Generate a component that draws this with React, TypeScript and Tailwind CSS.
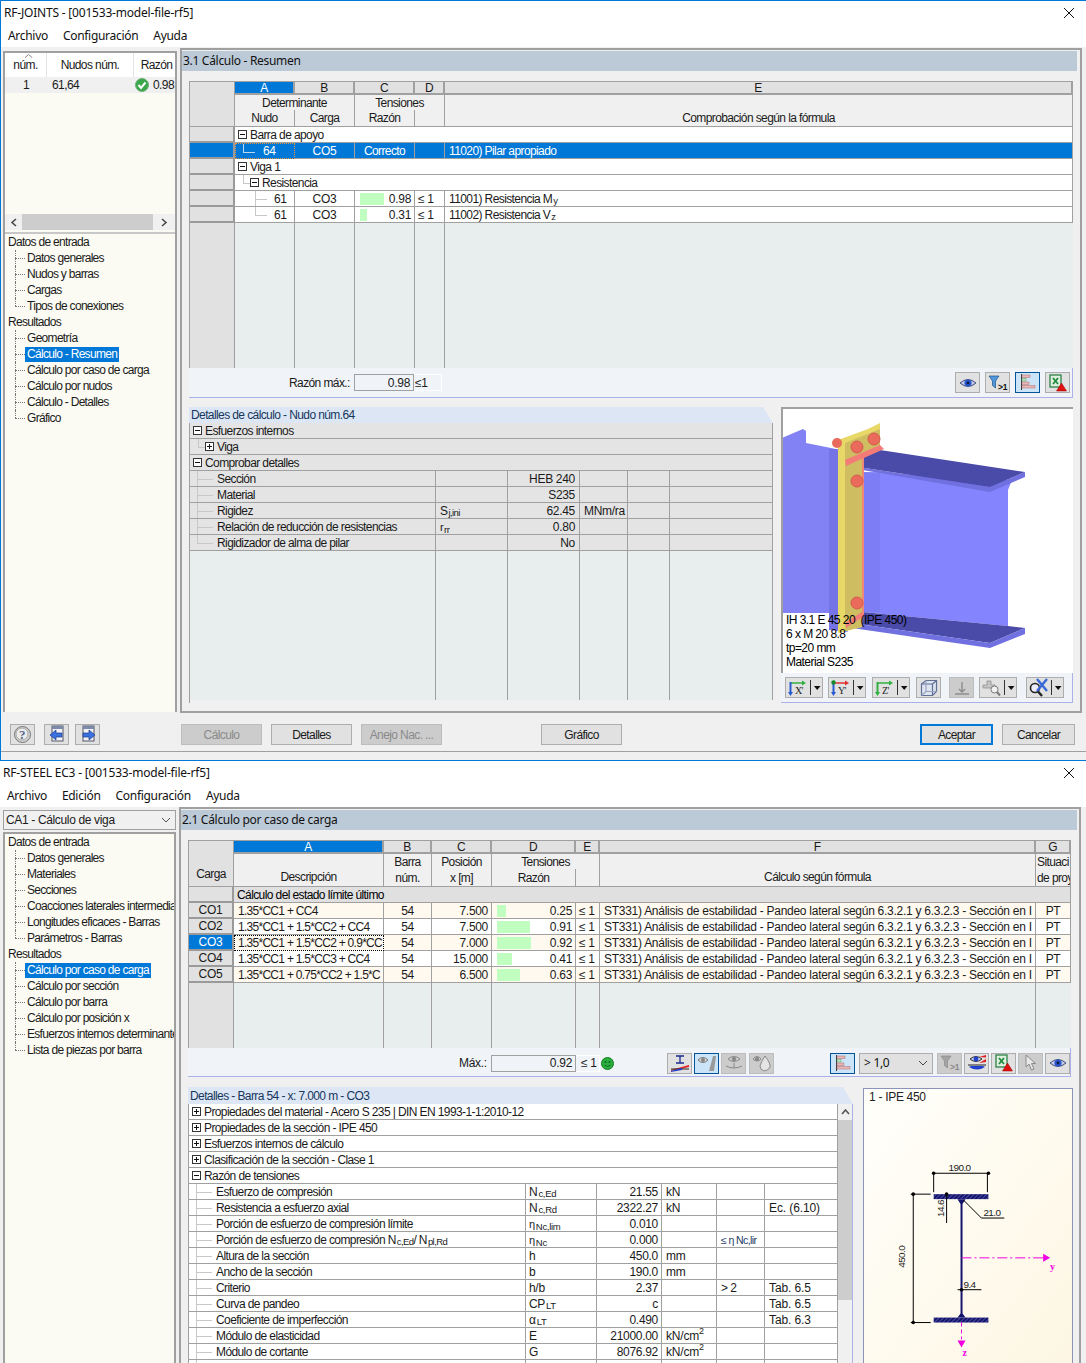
import React from "react";

const sans = "font-['Liberation_Sans',sans-serif] text-[12px] leading-[14px] tracking-[-0.6px] text-[#1a1a1a]";
const tree = "font-['Liberation_Sans',sans-serif] text-[12px] leading-[14px] tracking-[-0.7px] text-[#1a1a1a]";
const ui = "font-['Noto_Sans',sans-serif] text-[12px] leading-[14px] tracking-[-0.3px] text-[#111]";
const cell = "border-r border-b border-[#a0a0a0] flex items-center px-1 overflow-hidden whitespace-nowrap min-w-0";
const head = "border-r border-b border-[#a0a0a0] flex items-center justify-center overflow-hidden whitespace-nowrap min-w-0 bg-[#f0f0f0]";
const letter = "border-r-2 border-b-2 border-[#a0a0a0] bg-[#e1e1e1] flex items-center justify-center";
const rowBtn = "border-r-2 border-b-2 border-[#9a9a9a] bg-[#e1e1e1] flex items-center justify-center min-w-0 tracking-[-0.3px]";

const J_GRID = "grid grid-cols-[45px_60px_60px_60px_30px_1fr]";
const S_GRID = "grid grid-cols-[45px_150px_48px_60px_84px_24px_436px_1fr]";
const JD_GRID = "grid grid-cols-[246px_72px_72px_48px_42px_1fr]";
const SD_GRID = "grid grid-cols-[337px_71px_65px_55px_48px_1fr]";

const Sub = ({ children }: { children: React.ReactNode }) => <sub className="text-[9.5px] ml-[1px]">{children}</sub>;

const Box = ({ plus }: { plus?: boolean }) => (
  <svg width="9" height="9" viewBox="0 0 9 9" className="shrink-0 bg-white">
    <rect x="0.5" y="0.5" width="8" height="8" fill="white" stroke="#333" />
    <line x1="2" y1="4.5" x2="7" y2="4.5" stroke="#111" />
    {plus && <line x1="4.5" y1="2" x2="4.5" y2="7" stroke="#111" />}
  </svg>
);

// icons ------------------------------------------------------------------
const Eye = () => (
  <svg width="18" height="14" viewBox="0 0 18 14">
    <path d="M1 7 Q9 0 17 7 Q9 14 1 7Z" fill="#c4cbe8" stroke="#44507a" />
    <circle cx="9" cy="7" r="3.6" fill="#2a55d0" />
    <circle cx="9" cy="7" r="1.4" fill="#10183a" />
  </svg>
);
const Funnel = ({ gray }: { gray?: boolean }) => (
  <svg width="20" height="16" viewBox="0 0 20 16">
    <path d="M1 1 H11 L7.5 6 V13 L4.5 10.5 V6Z" fill={gray ? "#a4a4a4" : "#4d9ae0"} stroke={gray ? "#8a8a8a" : "#23507c"} strokeWidth="0.7" />
    <text x="10" y="14.5" fontSize="8.5" fontWeight="700" fontFamily="Liberation Sans" fill={gray ? "#888" : "#111"}>{">1"}</text>
  </svg>
);
const Bars = () => (
  <svg width="18" height="17" viewBox="0 0 18 17">
    <line x1="2.5" y1="0" x2="2.5" y2="16" stroke="#333" />
    <rect x="3" y="1" width="8" height="2.5" fill="#e8b8b8" stroke="#b06a6a" strokeWidth="0.5" />
    <rect x="3" y="4.5" width="4" height="2.5" fill="#bfe4bf" stroke="#5e9e5e" strokeWidth="0.5" />
    <rect x="3" y="8" width="7" height="2.5" fill="#e8b8b8" stroke="#b06a6a" strokeWidth="0.5" />
    <rect x="3" y="11.5" width="13" height="2.5" fill="#e8b8b8" stroke="#b06a6a" strokeWidth="0.5" />
  </svg>
);
const Excel = () => (
  <svg width="20" height="18" viewBox="0 0 20 18">
    <rect x="2" y="1" width="11" height="12" fill="#dfeedd" stroke="#1f7a3d" strokeWidth="1.2" />
    <path d="M5 4 L10 10 M10 4 L5 10" stroke="#1f8a3d" strokeWidth="1.8" />
    <path d="M13.5 9 L18.5 17 H8.5Z" fill="#e01010" stroke="#900" strokeWidth="0.5" />
  </svg>
);
const Cursor = () => (
  <svg width="16" height="18" viewBox="0 0 16 18">
    <path d="M3 1 L3 13 L6 10 L8.5 16 L11 15 L8.5 9.5 L12.5 9.5Z" fill="#e8e8e8" stroke="#8a8a8a" />
  </svg>
);
const Axis = ({ label, top }: { label: string; top?: boolean }) => (
  <svg width="22" height="18" viewBox="0 0 22 18">
    <path d="M3 4 H17" stroke={top ? "#e03030" : "#30b040"} strokeWidth="1.5" />
    <path d="M15 1.5 L19 4 L15 6.5Z" fill={top ? "#e03030" : "#30b040"} />
    <path d="M3.5 3 V14" stroke={label === "Z'" ? "#30b040" : "#2a5ad0"} strokeWidth="2" />
    <path d="M1 13 L3.5 17 L6 13Z" fill={label === "Z'" ? "#30b040" : "#2a5ad0"} />
    {top && <circle cx="3.5" cy="3.5" r="2.2" fill="#138a2d" />}
    <text x="8" y="15" fontSize="10" fontFamily="Liberation Serif" fill="#222">{label}</text>
  </svg>
);
const Cube = () => (
  <svg width="18" height="18" viewBox="0 0 18 18" fill="none" stroke="#5f6f95" strokeWidth="1.2">
    <path d="M1.5 5 L6 1.5 H16.5 V12.5 L12.5 16.5 H1.5Z" fill="#dde4f0" />
    <path d="M1.5 5 H12.5 V16.5 M12.5 5 L16.5 1.5" />
    <path d="M6 1.5 V12.5 H16.5 M6 12.5 L1.5 16.5" stroke="#98a4c0" />
  </svg>
);
const Weld = () => (
  <svg width="16" height="16" viewBox="0 0 16 16" stroke="#8d8d8d" fill="none">
    <path d="M8 2 V11 M5 9 L8 12 L11 9 M1 14 H15" strokeWidth="1.4" />
  </svg>
);
const ZoomPlus = () => (
  <svg width="20" height="18" viewBox="0 0 20 18">
    <path d="M1 6 H5 V2 H9 V6 H13 V9 H1Z" fill="#c4c4c4" stroke="#8a8a8a" strokeWidth="0.7" />
    <circle cx="12.5" cy="10.5" r="3.5" fill="#f2f2f2" stroke="#7a7a7a" />
    <path d="M15 13 L18 16.5" stroke="#7a7a7a" strokeWidth="2" />
  </svg>
);
const ZoomX = () => (
  <svg width="22" height="19" viewBox="0 0 22 19">
    <circle cx="7" cy="10" r="4.5" fill="#eef" stroke="#222" strokeWidth="1.6" />
    <path d="M10 13.5 L14 18" stroke="#222" strokeWidth="2.4" />
    <path d="M9 1 L19 13 M19 1 L9 13" stroke="#3868d8" strokeWidth="2.4" />
  </svg>
);
const Section = () => (
  <svg width="20" height="17" viewBox="0 0 20 17">
    <path d="M6 1 H14 M10 1 V8 M6 8 H14" stroke="#1a2a8a" strokeWidth="1.3" />
    <path d="M1 15 L19 10 V12 L1 16Z" fill="#e02020" />
    <path d="M1 14 H19" stroke="#222" />
    <path d="M1 16 L12 13 V15 L1 17Z" fill="#2040d0" />
  </svg>
);
const EyeSlope = () => (
  <svg width="20" height="17" viewBox="0 0 20 17">
    <path d="M1 5 Q6 0 11 5 Q6 10 1 5Z" fill="#d8d8d8" stroke="#777" />
    <circle cx="6" cy="5" r="2" fill="#888" />
    <path d="M12 16 L16 1 H19 L17 16Z" fill="#9a9a9a" />
  </svg>
);
const EyeLoad = () => (
  <svg width="20" height="17" viewBox="0 0 20 17" fill="none" stroke="#8a8a8a">
    <path d="M4 4 Q10 -1 16 4 Q10 9 4 4Z" fill="#d4d4d4" />
    <circle cx="10" cy="4" r="1.8" fill="#8a8a8a" />
    <path d="M2 11 Q10 15 18 11 M10 8 V13" />
  </svg>
);
const EyeDrop = () => (
  <svg width="20" height="18" viewBox="0 0 20 18" stroke="#8a8a8a">
    <path d="M1 5 Q5 0 9 5 Q5 9 1 5Z" fill="#d4d4d4" />
    <circle cx="5" cy="5" r="1.6" fill="#8a8a8a" />
    <path d="M13 2 Q19 10 18 13 Q16 17 12 17 Q8 16 8 12 Q9 8 13 2Z" fill="#e4e4e4" />
  </svg>
);
const EyeStress = () => (
  <svg width="20" height="18" viewBox="0 0 20 18">
    <path d="M3 5 Q9 0 15 5 Q9 10 3 5Z" fill="#c4cbe8" stroke="#333" />
    <circle cx="9" cy="5" r="2.4" fill="#2040d0" />
    <path d="M12 9 L19 5 V8Z" fill="#e02020" />
    <path d="M12 3 L19 1 V3.5Z" fill="#e02020" />
    <path d="M1 11 H19" stroke="#222" />
    <path d="M2 13 Q10 18 18 13 L16 12 H4Z" fill="#2040d0" />
  </svg>
);
const Help = () => (
  <svg width="19" height="19" viewBox="0 0 19 19">
    <circle cx="9.5" cy="9.5" r="8" fill="#d0d0d0" stroke="#777" />
    <circle cx="9" cy="9" r="6" fill="#ececec" stroke="#aaa" />
    <text x="6" y="14" fontSize="13" fontWeight="700" fontFamily="Liberation Serif" fill="#5a6a8e">?</text>
  </svg>
);
const NavArrow = ({ right }: { right?: boolean }) => (
  <svg width="20" height="19" viewBox="0 0 20 19">
    <rect x="5" y="1" width="11" height="15" fill="#f2f2f6" stroke="#556" />
    <rect x="5" y="1" width="11" height="3" fill="#7a8aa8" />
    {right ? (
      <path d="M5 8 H11 V5 L17 10 L11 15 V12 H5Z" fill="#3a70e0" stroke="#1c3c88" strokeWidth="0.7" />
    ) : (
      <path d="M15 8 H9 V5 L3 10 L9 15 V12 H15Z" fill="#3a70e0" stroke="#1c3c88" strokeWidth="0.7" />
    )}
  </svg>
);

const Tool = ({ children, active, off, className = "" }: { children: React.ReactNode; active?: boolean; off?: boolean; className?: string }) => (
  <div
    className={`w-[25px] h-[21px] shrink-0 flex items-center justify-center border ${
      active ? "bg-[#cce4f7] border-[#005499]" : off ? "bg-[#cccccc] border-[#bdbdbd]" : "bg-[#e1e1e1] border-[#adadad]"
    } ${className}`}
  >
    {children}
  </div>
);

const Split = ({ children, className = "" }: { children: React.ReactNode; className?: string }) => (
  <div className={`h-[21px] w-[38px] shrink-0 flex items-center border border-[#adadad] bg-[#e1e1e1] ${className}`}>
    <div className="w-[25px] flex justify-center">{children}</div>
    <div className="w-px h-[15px] bg-[#333]" />
    <svg width="11" height="6" viewBox="0 0 11 6" className="ml-[1px]">
      <path d="M2 1 H9 L5.5 5Z" fill="#111" />
    </svg>
  </div>
);

const Btn = ({ children, off, primary, className = "" }: { children: React.ReactNode; off?: boolean; primary?: boolean; className?: string }) => (
  <div
    className={`h-[21px] shrink-0 flex items-center justify-center ${
      primary ? "border-2 border-[#0078d7] bg-[#e1e1e1]" : off ? "border border-[#bdbdbd] bg-[#cccccc]" : "border border-[#adadad] bg-[#e1e1e1]"
    } ${sans} ${off ? "!text-[#8a8a8a]" : ""} ${className}`}
  >
    {children}
  </div>
);

// shell ------------------------------------------------------------------
const TitleBar = ({ title, menus, h }: { title: string; menus: { name: string; cls: string }[]; h: string }) => (
  <div className="bg-white">
    <div className={`${h} flex items-center justify-between font-['Noto_Sans',sans-serif] text-[12px] tracking-[-0.2px] text-[#111]`}>
      <span className="pl-[3px]">{title}</span>
      <svg width="12" height="12" viewBox="0 0 12 12" className="mr-[11px]" stroke="#111">
        <path d="M1 1 L11 11 M11 1 L1 11" />
      </svg>
    </div>
    <div className={`${h} flex items-center ${ui}`}>
      {menus.map((m) => (
        <span key={m.name} className={m.cls}>{m.name}</span>
      ))}
    </div>
  </div>
);

const NavItem = ({ label, last, selected }: { label: string; last?: boolean; selected?: boolean }) => (
  <div className="relative h-4 flex items-center pl-[5px] whitespace-nowrap overflow-hidden">
    <span className={`absolute left-[10px] top-0 border-l border-dotted border-[#777] ${last ? "h-2" : "h-4"}`} />
    <span className="w-[10px] ml-[5px] shrink-0 border-t border-dotted border-[#777]" />
    <span className={selected ? "bg-[#0078d7] text-white px-[2px] h-[15px] flex items-center" : "px-[2px]"}>{label}</span>
  </div>
);

const NavTree = ({ groups, selected }: { groups: { title: string; items: string[] }[]; selected: string }) => (
  <div className={`${tree} overflow-hidden`}>
    {groups.map((g) => (
      <div key={g.title}>
        <div className="h-4 flex items-center pl-[3px]">{g.title}</div>
        {g.items.map((it, i) => (
          <NavItem key={it} label={it} last={i === g.items.length - 1} selected={it === selected} />
        ))}
      </div>
    ))}
  </div>
);

const Ratio = ({ value, scale, className = "" }: { value: number; scale: number; className?: string }) => (
  <div className={`${cell} justify-between !pl-[5px] !pr-[3px] tracking-[-0.3px] ${className}`}>
    <span className="h-[12px] bg-[#c0ffc0] shrink-0" style={{ width: Math.round(value * scale) }} />
    <span>{value.toFixed(2)}</span>
  </div>
);

// RF-JOINTS --------------------------------------------------------------
const joinsNav = [
  { title: "Datos de entrada", items: ["Datos generales", "Nudos y barras", "Cargas", "Tipos de conexiones"] },
  { title: "Resultados", items: ["Geometría", "Cálculo - Resumen", "Cálculo por caso de carga", "Cálculo por nudos", "Cálculo - Detalles", "Gráfico"] },
];

const JoinsLeft = () => (
  <div className="mt-[3px] ml-[2px] w-[174px] h-[661px] border-t-2 border-l-2 border-r-2 border-[#a0a0a0] bg-[#fbfbf3] flex flex-col">
    <div className={`grid grid-cols-[42px_87px_1fr] h-[24px] ${sans} tracking-[-0.3px] bg-white`}>
      <div className="relative flex items-end justify-center pb-[5px] border-r border-[#e4e4e4]">
        <svg width="9" height="4" viewBox="0 0 9 4" fill="none" stroke="#888" className="absolute top-[1px] left-[19px]"><path d="M1 3.5 L4.5 0.5 L8 3.5" /></svg>
        núm.
      </div>
      <div className="flex items-end justify-center pb-[5px] border-r border-[#e4e4e4]">Nudos núm.</div>
      <div className="flex items-end justify-center pb-[5px] pl-[4px]">Razón</div>
    </div>
    <div className={`grid grid-cols-[42px_87px_1fr] h-4 bg-[#f0f0f0] ${sans} tracking-[-0.1px]`}>
      <div className="flex items-center justify-center">1</div>
      <div className="flex items-center pl-[5px]">61,64</div>
      <div className="flex items-center justify-end pr-[1px] gap-[4px]">
        <svg width="14" height="14" viewBox="0 0 14 14">
          <circle cx="7" cy="7" r="6.5" fill="#3aa84a" stroke="#6fae7c" />
          <path d="M3.5 7 L6 10 L10.5 4.5" fill="none" stroke="white" strokeWidth="2" />
        </svg>
        0.98
      </div>
    </div>
    <div className="h-[121px]" />
    <div className="h-4 flex items-stretch bg-[#f0f0f0]">
      <div className="w-[17px] flex items-center justify-center">
        <svg width="7" height="9" viewBox="0 0 7 9" fill="none" stroke="#444" strokeWidth="1.5"><path d="M6 1 L2 4.5 L6 8" /></svg>
      </div>
      <div className="w-[131px] bg-[#cdcdcd]" />
      <div className="flex-1 flex items-center justify-center">
        <svg width="7" height="9" viewBox="0 0 7 9" fill="none" stroke="#444" strokeWidth="1.5"><path d="M1 1 L5 4.5 L1 8" /></svg>
      </div>
    </div>
    <div className="h-[2px] mt-[2px] bg-[#c8c8c8]" />
    <NavTree groups={joinsNav} selected="Cálculo - Resumen" />
  </div>
);

const JoinsTable = () => (
  <div className={`ml-[7px] mt-[10px] w-[884px] border-t border-l border-[#a0a0a0] ${sans}`}>
    <div className={`${J_GRID} grid-rows-[13px_15px_17px] bg-[#f0f0f0]`}>
      <div className="row-span-3 bg-[#e1e1e1] border-r border-b border-[#a0a0a0]" />
      <div className="border-r-2 border-b-2 border-[#a0a0a0] bg-[#0078d7] text-white flex items-center justify-center">A</div>
      <div className={letter}>B</div>
      <div className={letter}>C</div>
      <div className={letter}>D</div>
      <div className={letter}>E</div>
      <div className={`${head} col-span-2 !border-b-0`}>Determinante</div>
      <div className={`${head} col-span-2 !border-b-0`}>Tensiones</div>
      <div className={`${head} row-span-2 !items-end pb-[1px]`}>Comprobación según la fórmula</div>
      <div className={head}>Nudo</div>
      <div className={head}>Carga</div>
      <div className={head}>Razón</div>
      <div className={head} />
    </div>
    <div className={`${J_GRID} h-4`}>
      <div className={rowBtn} />
      <div className={`${cell} col-span-5 bg-white gap-[3px] !pl-[3px]`}><Box />Barra de apoyo</div>
    </div>
    <div className={`${J_GRID} h-4 bg-[#0078d7] text-white`}>
      <div className="border-r-2 border-b-2 border-[#9a9a9a] bg-[#0078d7]" />
      <div className="relative border border-dotted border-[#e8963c] flex items-center pl-[27px] text-white tracking-[-0.3px]">
        <span className="absolute left-[7px] top-0 h-2 w-px bg-[#bcd8f0]" />
        <span className="absolute left-[7px] top-2 w-[12px] h-px bg-[#bcd8f0]" />
        64
      </div>
      <div className={`${cell} justify-center border-[#6aa8dc] tracking-[-0.3px]`}>CO5</div>
      <div className={`${cell} justify-center border-[#6aa8dc]`}>Correcto</div>
      <div className={`${cell} border-[#6aa8dc]`} />
      <div className={`${cell} border-[#6aa8dc]`}>11020) Pilar apropiado</div>
    </div>
    <div className={`${J_GRID} h-4`}>
      <div className={rowBtn} />
      <div className={`${cell} col-span-5 bg-white gap-[3px] !pl-[3px]`}><Box />Viga 1</div>
    </div>
    <div className={`${J_GRID} h-4`}>
      <div className={rowBtn} />
      <div className={`${cell} relative col-span-5 bg-white gap-[3px] !pl-[15px]`}>
        <span className="absolute left-[8px] top-0 h-2 w-px bg-[#c8c8c8]" />
        <span className="absolute left-[8px] top-2 w-[7px] h-px bg-[#c8c8c8]" />
        <Box />Resistencia
      </div>
    </div>
    {[
      { v: 0.98, t: <>11001) Resistencia M<Sub>y</Sub></>, last: false },
      { v: 0.31, t: <>11002) Resistencia V<Sub>z</Sub></>, last: true },
    ].map((r) => (
      <div key={r.v} className={`${J_GRID} h-4 bg-white`}>
        <div className={rowBtn} />
        <div className={`${cell} relative !pl-[39px] tracking-[-0.3px]`}>
          <span className={`absolute left-[20px] top-0 w-px bg-[#c8c8c8] ${r.last ? "h-2" : "h-4"}`} />
          <span className="absolute left-[20px] top-2 w-[12px] h-px bg-[#c8c8c8]" />
          61
        </div>
        <div className={`${cell} justify-center tracking-[-0.3px]`}>CO3</div>
        <Ratio value={r.v} scale={24} />
        <div className={`${cell} !px-[3px] tracking-[-0.3px]`}>≤ 1</div>
        <div className={cell}>{r.t}</div>
      </div>
    ))}
    <div className={`${J_GRID} h-[145px]`}>
      <div className="bg-[#e1e1e1] border-r border-[#a0a0a0]" />
      {[0, 1, 2, 3].map((i) => <div key={i} className="bg-[#e8eded] border-r border-[#a0a0a0]" />)}
      <div className="bg-[#e8eded]" />
    </div>
    <div className="h-[30px] -ml-px bg-[#f0f4f8] border-b border-r border-[#a9b1e8] flex items-center tracking-[-0.3px]">
      <span className="ml-[100px] w-[65px] tracking-[-0.6px]">Razón máx.:</span>
      <div className="w-[60px] h-[17px] border border-[#a0a0a0] flex items-center justify-end pr-[3px]">0.98</div>
      <div className="w-[28px] h-[17px] border border-l-0 border-white flex items-center pl-[1px]">≤1</div>
      <Tool className="ml-[513px]"><Eye /></Tool>
      <Tool className="ml-[5px]"><Funnel /></Tool>
      <Tool active className="ml-[5px]"><Bars /></Tool>
      <Tool className="ml-[5px]"><Excel /></Tool>
    </div>
  </div>
);

const joinsDetails: [React.ReactNode, React.ReactNode, string, string][] = [
  ["Sección", "", "HEB 240", ""],
  ["Material", "", "S235", ""],
  ["Rigidez", <>S<Sub>j,ini</Sub></>, "62.45", "MNm/ra"],
  ["Relación de reducción de resistencias", <span className="text-[11px]">r<Sub>rr</Sub></span>, "0.80", ""],
  ["Rigidizador de alma de pilar", "", "No", ""],
];

const Chamfer = ({ text, className = "" }: { text: string; className?: string }) => (
  <div className={`bg-[#dce6f4] flex items-center pl-[2px] text-[#17365d] [clip-path:polygon(0_0,calc(100%-10px)_0,100%_100%,0_100%)] ${className}`}>
    {text}
  </div>
);

const JointShape = () => (
  <svg viewBox="783 409 290 265" className="absolute inset-0 w-full h-[265px]">
    <path d="M782 438 L803 429 L806 431 L806 443 L836 449 L838 460 L829 458 L829 630 L848 632 L838 613 L782 613Z" fill="#8282f4" />
    <path d="M829 449 H840 V630 H829Z" fill="#7474e6" />
    <path d="M862 472 L1012 480 L1008 490 V626 L862 612Z" fill="#8484ff" />
    <path d="M862 472 H880 V612 H862Z" fill="#7c7cf4" opacity="0.8" />
    <path d="M845 467 L990 492 L1025 477 V472 L990 487 L845 465Z" fill="#7070e0" />
    <path d="M845 465 L880 450 L1025 472 L990 487Z" fill="#4a4aa8" />
    <path d="M845 622 L990 643 L1025 628 L1008 626 L862 612 L845 618Z" fill="#4a4aa8" />
    <path d="M845 622 L990 643 L1025 628 V634 L990 648 L845 627Z" fill="#7070e0" />
    <path d="M838 440 L868 429 L880 423 V446 L862 458 V627 L838 633Z" fill="#e8d868" />
    <path d="M845 443 L880 429 V446 L862 458 V627 L845 631Z" fill="#cfbd62" />
    <path d="M862 458 H864 V614 L862 627Z" fill="#f08878" />
    <path d="M845 460 L880 445 L884 449 L846 466Z" fill="#f47c78" />
    <path d="M846 622 L862 612 L864 616 L846 628Z" fill="#f47c78" />
    <circle cx="837" cy="443" r="5" fill="#e86a5c" />
    <circle cx="857" cy="447" r="6" fill="#ea6a5c" stroke="#d65a4e" />
    <circle cx="874" cy="439" r="6" fill="#ea6a5c" stroke="#d65a4e" />
    <circle cx="857" cy="481" r="6" fill="#ea6a5c" stroke="#d65a4e" />
    <circle cx="857" cy="603" r="6" fill="#ea6a5c" stroke="#d65a4e" />
  </svg>
);

const JoinsBody = () => (
  <div className={`flex ml-[7px] mt-[9px] ${sans}`}>
    <div className="w-[584px] h-[296px] flex flex-col">
      <Chamfer text="Detalles de cálculo - Nudo núm.64" className="h-4" />
      <div className="flex-1 border-l border-[#a0a0a0]">
        {([["Esfuerzos internos", false, 0], ["Viga", true, 1], ["Comprobar detalles", false, 0]] as [string, boolean, number][]).map(([t, p, d]) => (
          <div key={t} className={`${cell} relative h-4 bg-[#e4e4e4] gap-[3px] ${d ? "!pl-[15px]" : "!pl-[3px]"}`}>
            {d === 1 && <span className="absolute left-[8px] top-0 h-2 w-px bg-[#c8c8c8]" />}
            {d === 1 && <span className="absolute left-[8px] top-2 w-[7px] h-px bg-[#c8c8c8]" />}
            <Box plus={p} />{t}
          </div>
        ))}
        {joinsDetails.map(([n, s, v, u], i) => (
          <div key={i} className={`${JD_GRID} h-4 bg-[#e4e4e4]`}>
            <div className={`${cell} relative !pl-[27px]`}>
              <span className={`absolute left-[7px] top-0 w-px bg-[#c8c8c8] ${i === 4 ? "h-2" : "h-4"}`} />
              <span className="absolute left-[7px] top-2 w-[16px] h-px bg-[#c8c8c8]" />
              {n}
            </div>
            <div className={cell}>{s}</div>
            <div className={`${cell} justify-end tracking-[-0.3px]`}>{v}</div>
            <div className={`${cell} tracking-[-0.3px]`}>{u}</div>
            <div className={cell} />
            <div className={cell} />
          </div>
        ))}
        <div className={`${JD_GRID} h-[149px] bg-[#e8eded]`}>
          {[0, 1, 2, 3, 4, 5].map((i) => <div key={i} className="border-r border-[#a0a0a0]" />)}
        </div>
      </div>
    </div>
    <div className="relative ml-[8px] w-[292px] h-[296px] bg-white border-t-2 border-l-2 border-[#a0a0a0]">
      <JointShape />
      <div className="absolute left-[3px] top-[204px] text-[12px] leading-[14px] tracking-[-0.55px] text-black whitespace-pre">
        {"IH 3.1 E 45 20  (IPE 450)\n6 x M 20 8.8\ntp=20 mm\nMaterial S235"}
      </div>
      <div className="absolute left-[-2px] top-[264px] w-[292px] h-[30px] bg-[#f0f4f8] border-r border-b border-[#a9b1e8] flex items-center">
        <Split className="ml-[4px]"><Axis label="X'" /></Split>
        <Split className="ml-[5px]"><Axis label="Y'" top /></Split>
        <Split className="ml-[6px]"><Axis label="Z'" /></Split>
        <Tool className="ml-[6px]"><Cube /></Tool>
        <Tool off className="ml-[8px]"><Weld /></Tool>
        <Split className="ml-[5px]"><ZoomPlus /></Split>
        <Split className="ml-[9px]"><ZoomX /></Split>
      </div>
    </div>
  </div>
);

const JoinsWindow = () => (
  <div className="h-[760px] border-t border-l border-[#0078d7] bg-[#f0f0f0] overflow-hidden">
    <TitleBar
      title="RF-JOINTS - [001533-model-file-rf5]"
      h="h-[23px]"
      menus={[
        { name: "Archivo", cls: "ml-[7px]" },
        { name: "Configuración", cls: "ml-[15px]" },
        { name: "Ayuda", cls: "ml-[15px]" },
      ]}
    />
    <div className="flex h-[665px] mt-[1px]">
      <JoinsLeft />
      <div className="ml-[3px] w-[902px] h-[665px] border-2 border-[#a0a0a0] pt-[1px]">
        <div className={`w-[895px] h-[20px] bg-[#bccad8] flex items-center pl-[1px] ${ui}`}>3.1 Cálculo - Resumen</div>
        <JoinsTable />
        <JoinsBody />
      </div>
    </div>
    <div className="h-[39px] flex items-start pt-[11px] border-b border-[#a0a0a0]">
      <Tool className="ml-[9px]"><Help /></Tool>
      <Tool className="ml-[9px]"><NavArrow /></Tool>
      <Tool className="ml-[6px]"><NavArrow right /></Tool>
      <Btn off className="ml-[81px] w-[81px]">Cálculo</Btn>
      <Btn className="ml-[9px] w-[81px]">Detalles</Btn>
      <Btn off className="ml-[9px] w-[81px]">Anejo Nac. ...</Btn>
      <Btn className="ml-[99px] w-[81px]">Gráfico</Btn>
      <Btn primary className="ml-[298px] w-[73px]">Aceptar</Btn>
      <Btn className="ml-[9px] w-[73px]">Cancelar</Btn>
    </div>
  </div>
);

// RF-STEEL ---------------------------------------------------------------
const steelNav = [
  { title: "Datos de entrada", items: ["Datos generales", "Materiales", "Secciones", "Coacciones laterales intermedias", "Longitudes eficaces - Barras", "Parámetros - Barras"] },
  { title: "Resultados", items: ["Cálculo por caso de carga", "Cálculo por sección", "Cálculo por barra", "Cálculo por posición x", "Esfuerzos internos determinantes", "Lista de piezas por barra"] },
];

const steelRows = [
  { id: "CO1", d: "1.35*CC1 + CC4", x: "7.500", r: 0.25 },
  { id: "CO2", d: "1.35*CC1 + 1.5*CC2 + CC4", x: "7.500", r: 0.91 },
  { id: "CO3", d: "1.35*CC1 + 1.5*CC2 + 0.9*CC", x: "7.000", r: 0.92 },
  { id: "CO4", d: "1.35*CC1 + 1.5*CC3 + CC4", x: "15.000", r: 0.41 },
  { id: "CO5", d: "1.35*CC1 + 0.75*CC2 + 1.5*C", x: "6.500", r: 0.63 },
];

const SteelTable = () => (
  <div className={`ml-[7px] mt-[10px] w-[883px] border-t border-l border-[#a0a0a0] ${sans}`}>
    <div className={`${S_GRID} grid-rows-[13px_15px_18px] bg-[#f0f0f0]`}>
      <div className="row-span-3 bg-[#e1e1e1] border-r border-b border-[#a0a0a0] flex items-end justify-center pb-[5px]">Carga</div>
      <div className="border-r-2 border-b-2 border-[#a0a0a0] bg-[#0078d7] text-white flex items-center justify-center">A</div>
      {["B", "C", "D", "E", "F", "G"].map((c) => <div key={c} className={letter}>{c}</div>)}
      <div className={`${head} row-span-2 !items-end pb-[2px]`}>Descripción</div>
      <div className={`${head} !border-b-0`}>Barra</div>
      <div className={`${head} !border-b-0`}>Posición</div>
      <div className={`${head} col-span-2 !border-b-0`}>Tensiones</div>
      <div className={`${head} row-span-2 !items-end pb-[2px]`}>Cálculo según fórmula</div>
      <div className={`${head} !border-b-0 !justify-start pl-[1px]`}>Situaci</div>
      <div className={head}>núm.</div>
      <div className={head}>x [m]</div>
      <div className={head}>Razón</div>
      <div className={head} />
      <div className={`${head} !justify-start pl-[1px]`}>de proy</div>
    </div>
    <div className={`${S_GRID} h-4`}>
      <div className={rowBtn} />
      <div className={`${cell} col-span-7 bg-[#e0e0e0] !pl-[3px] text-black`}>Cálculo del estado límite último</div>
    </div>
    {steelRows.map((r, i) => (
      <div key={r.id} className={`${S_GRID} h-4 ${i % 2 === 0 ? "bg-[#fff9ef]" : "bg-white"}`}>
        {r.id === "CO3" ? (
          <div className="border-r-2 border-b-2 border-[#9a9a9a] bg-[#0078d7] text-white flex items-center justify-center tracking-[-0.3px]">{r.id}</div>
        ) : (
          <div className={rowBtn}>{r.id}</div>
        )}
        <div className={r.id === "CO3" ? "border border-dotted border-black flex items-center px-[3px] overflow-hidden whitespace-nowrap tracking-[-0.72px]" : `${cell} !px-[4px] tracking-[-0.72px]`}>{r.d}</div>
        <div className={`${cell} justify-center tracking-[-0.3px]`}>54</div>
        <div className={`${cell} justify-end !pr-[3px] tracking-[-0.3px]`}>{r.x}</div>
        <Ratio value={r.r} scale={36.5} />
        <div className={`${cell} !px-[3px] tracking-[-0.3px]`}>≤ 1</div>
        <div className={`${cell} tracking-[-0.27px]`}>ST331) Análisis de estabilidad - Pandeo lateral según 6.3.2.1 y 6.3.2.3 - Sección en I</div>
        <div className={`${cell} justify-center tracking-[-0.3px]`}>PT</div>
      </div>
    ))}
    <div className={`${S_GRID} h-[65px]`}>
      <div className="bg-[#e1e1e1] border-r border-[#a0a0a0]" />
      {[0, 1, 2, 3, 4, 5].map((i) => <div key={i} className="bg-[#e8eded] border-r border-[#a0a0a0]" />)}
      <div className="bg-[#e8eded]" />
    </div>
    <div className="h-[29px] -ml-px pt-[2px] bg-[#f0f4f8] border-b border-r border-[#a9b1e8] flex items-center tracking-[-0.3px]">
      <span className="ml-[271px] w-[32px]">Máx.:</span>
      <div className="w-[85px] h-[17px] border border-[#a0a0a0] flex items-center justify-end pr-[3px]">0.92</div>
      <div className="w-[24px] h-[17px] border border-l-0 border-white flex items-center pl-[5px]">≤ 1</div>
      <svg width="13" height="13" viewBox="0 0 13 13" className="ml-[1px]">
        <circle cx="6.5" cy="6.5" r="6" fill="#2cae3a" stroke="#0f7a20" />
        <circle cx="4.5" cy="5" r="1" fill="#063" />
        <circle cx="8.5" cy="5" r="1" fill="#063" />
        <path d="M3.5 8 Q6.5 11 9.5 8" fill="none" stroke="#063" />
      </svg>
      <Tool className="ml-[53px]"><Section /></Tool>
      <Tool active className="ml-[2px]"><EyeSlope /></Tool>
      <Tool off className="ml-[2px]"><EyeLoad /></Tool>
      <Tool off className="ml-[3px]"><EyeDrop /></Tool>
      <Tool active className="ml-[56px]"><Bars /></Tool>
      <div className={`ml-[4px] w-[74px] h-[21px] border border-[#adadad] bg-[#e1e1e1] flex items-center justify-between px-[4px] ${ui}`}>
        {"> 1,0"}
        <svg width="10" height="6" viewBox="0 0 10 6" fill="none" stroke="#444"><path d="M1 1 L5 5 L9 1" /></svg>
      </div>
      <Tool off className="ml-[4px]"><Funnel gray /></Tool>
      <Tool className="ml-[2px]"><EyeStress /></Tool>
      <Tool className="ml-[2px]"><Excel /></Tool>
      <Tool off className="ml-[2px]"><Cursor /></Tool>
      <Tool className="ml-[2px]"><Eye /></Tool>
    </div>
  </div>
);

const steelTree = [
  { t: "Propiedades del material - Acero S 235 | DIN EN 1993-1-1:2010-12", plus: true },
  { t: "Propiedades de la sección - IPE 450", plus: true },
  { t: "Esfuerzos internos de cálculo", plus: true },
  { t: "Clasificación de la sección - Clase 1", plus: true },
  { t: "Razón de tensiones", plus: false },
];

const steelData: [React.ReactNode, React.ReactNode, string, React.ReactNode, React.ReactNode, string][] = [
  ["Esfuerzo de compresión", <>N<Sub>c,Ed</Sub></>, "21.55", "kN", "", ""],
  ["Resistencia a esfuerzo axial", <>N<Sub>c,Rd</Sub></>, "2322.27", "kN", "", "Ec. (6.10)"],
  ["Porción de esfuerzo de compresión límite", <span className="text-[11px]">η<Sub>Nc,lim</Sub></span>, "0.010", "", "", ""],
  [<>Porción de esfuerzo de compresión N<Sub>c,Ed</Sub> / N<Sub>pl,Rd</Sub></>, <span className="text-[11px]">η<Sub>Nc</Sub></span>, "0.000", "", <span className="text-[10.5px] text-[#223a66]">≤ η Nc,lir</span>, ""],
  ["Altura de la sección", "h", "450.0", "mm", "", ""],
  ["Ancho de la sección", "b", "190.0", "mm", "", ""],
  ["Criterio", "h/b", "2.37", "", "> 2", "Tab. 6.5"],
  ["Curva de pandeo", <>CP<Sub>LT</Sub></>, "c", "", "", "Tab. 6.5"],
  ["Coeficiente de imperfección", <>α<Sub>LT</Sub></>, "0.490", "", "", "Tab. 6.3"],
  ["Módulo de elasticidad", "E", "21000.00", <>kN/cm<sup className="text-[9px]">2</sup></>, "", ""],
  ["Módulo de cortante", "G", "8076.92", <>kN/cm<sup className="text-[9px]">2</sup></>, "", ""],
  ["", "", "", "", "", ""],
];

const SectionDrawing = () => (
  <svg viewBox="864 1089 209 275" className="absolute inset-0 w-full h-[275px]">
    <defs>
      <pattern id="hatch" width="3" height="3" patternUnits="userSpaceOnUse" patternTransform="rotate(45)">
        <rect width="3" height="3" fill="#14146e" />
        <line x1="0" y1="0" x2="0" y2="3" stroke="#9a9ae0" strokeWidth="0.8" />
      </pattern>
    </defs>
    <rect x="934" y="1194" width="55" height="5" fill="url(#hatch)" />
    <rect x="934" y="1318" width="55" height="5" fill="url(#hatch)" />
    <path d="M958 1199 H966 L963 1204 V1314 L966 1318 H958 L961 1314 V1204Z" fill="#14146e" />
    <g stroke="#000" strokeWidth="1" fill="none">
      <path d="M934 1173 H989 M934 1173 V1192 M988 1173 V1192" />
      <path d="M913.5 1194 V1323 M911 1194 H931 M911 1323 H931" />
      <path d="M947 1193 V1223" />
      <path d="M964 1200 L982 1218 H1005" />
      <path d="M958 1290 H982" />
    </g>
    <g fill="#000">
      <circle cx="934" cy="1173" r="1.8" />
      <circle cx="989" cy="1173" r="1.8" />
      <circle cx="913.5" cy="1194" r="1.8" />
      <circle cx="913.5" cy="1323" r="1.8" />
      <circle cx="947" cy="1194" r="1.8" />
      <circle cx="962" cy="1290" r="1.8" />
    </g>
    <g fontFamily="Liberation Sans" fontSize="10" fill="#222">
      <text x="949" y="1171">190.0</text>
      <text x="984" y="1216">21.0</text>
      <text x="964" y="1288">9.4</text>
      <text transform="translate(905 1268) rotate(-90)" fontSize="10">450.0</text>
      <text transform="translate(944 1217) rotate(-90)" fontSize="10">14.6</text>
    </g>
    <path d="M962 1258 H1046" stroke="#f000e0" strokeWidth="1" strokeDasharray="10 3 2 3" />
    <path d="M1044 1254 L1051 1258 L1044 1262Z" fill="#f000e0" />
    <path d="M962 1323 V1340" stroke="#f000e0" strokeWidth="1" strokeDasharray="4 3" />
    <path d="M958 1341 L966 1341 L962 1348Z" fill="#f000e0" />
    <text x="1051" y="1270" fontFamily="Liberation Serif" fontSize="10" fontWeight="700" fill="#f000e0">y</text>
    <text x="963" y="1357" fontFamily="Liberation Serif" fontSize="10" fontWeight="700" fill="#f000e0">z</text>
  </svg>
);

const SteelBody = () => (
  <div className={`flex ml-[7px] mt-[10px] ${sans}`}>
    <div className="w-[665px] flex flex-col">
      <Chamfer text="Detalles - Barra 54 - x: 7.000 m - CO3" className="h-[17px]" />
      <div className="flex">
        <div className="w-[650px] bg-white border-l border-[#a0a0a0]">
          {steelTree.map((r) => (
            <div key={r.t} className={`${cell} h-4 gap-[3px] !pl-[3px]`}><Box plus={r.plus} />{r.t}</div>
          ))}
          {steelData.map(([n, s, v, u, l, e], i) => (
            <div key={i} className={`${SD_GRID} h-4`}>
              <div className={`${cell} relative !pl-[27px]`}>
                <span className="absolute left-[7px] top-0 h-4 w-px bg-[#c8c8c8]" />
                <span className="absolute left-[7px] top-2 w-[16px] h-px bg-[#c8c8c8]" />
                {n}
              </div>
              <div className={`${cell} !pl-[3px] tracking-[-0.3px]`}>{s}</div>
              <div className={`${cell} justify-end !pr-[3px] tracking-[-0.3px]`}>{v}</div>
              <div className={`${cell} tracking-[-0.2px]`}>{u}</div>
              <div className={cell}>{l}</div>
              <div className={`${cell} tracking-[-0.1px]`}>{e}</div>
            </div>
          ))}
        </div>
        <div className="w-[15px] bg-[#f0f0f0] border-r border-[#a9b1e8] flex flex-col">
          <div className="h-4 flex items-center justify-center">
            <svg width="9" height="6" viewBox="0 0 9 6" fill="none" stroke="#555" strokeWidth="1.6"><path d="M1 5 L4.5 1 L8 5" /></svg>
          </div>
          <div className="h-[180px] bg-[#cdcdcd]" />
        </div>
      </div>
    </div>
    <div className="relative ml-[10px] mt-[1px] w-[210px] h-[276px] border-t border-l border-r border-[#8c93b8] bg-linear-to-br from-[#fffffb] to-[#fdf6e3]">
      <span className="absolute left-[5px] top-[1px] text-[#222] tracking-[-0.3px]">1 - IPE 450</span>
      <SectionDrawing />
    </div>
  </div>
);

const SteelWindow = () => (
  <div className="h-[603px] border-t border-[#0078d7] bg-[#f0f0f0] overflow-hidden">
    <TitleBar
      title="RF-STEEL EC3 - [001533-model-file-rf5]"
      h="h-[23px]"
      menus={[
        { name: "Archivo", cls: "ml-[7px]" },
        { name: "Edición", cls: "ml-[15px]" },
        { name: "Configuración", cls: "ml-[15px]" },
        { name: "Ayuda", cls: "ml-[15px]" },
      ]}
    />
    <div className="flex h-[580px]">
      <div className="ml-[3px] w-[173px] shrink-0">
        <div className={`mt-[3px] h-[20px] border border-[#a0a0a0] bg-[#f0f0f0] flex items-center justify-between pl-[2px] pr-[2px] ${sans} tracking-[-0.35px]`}>
          CA1 - Cálculo de viga
          <svg width="10" height="6" viewBox="0 0 10 6" fill="none" stroke="#555" className="mr-[2px]"><path d="M1 1 L5 5 L9 1" /></svg>
        </div>
        <div className="mt-[2px] h-[560px] border-t-2 border-l-2 border-r-2 border-[#a0a0a0] bg-[#fbfbf3]">
          <NavTree groups={steelNav} selected="Cálculo por caso de carga" />
        </div>
      </div>
      <div className="ml-[3px] w-[902px] border-t-2 border-l-2 border-r-2 border-[#a0a0a0] pt-[1px]">
        <div className={`w-[896px] h-[20px] bg-[#bccad8] flex items-center pl-[1px] ${ui}`}>2.1 Cálculo por caso de carga</div>
        <SteelTable />
        <SteelBody />
      </div>
    </div>
  </div>
);

export default function App() {
  return (
    <div className="w-[1086px] h-[1363px] overflow-hidden bg-white">
      <JoinsWindow />
      <SteelWindow />
    </div>
  );
}
